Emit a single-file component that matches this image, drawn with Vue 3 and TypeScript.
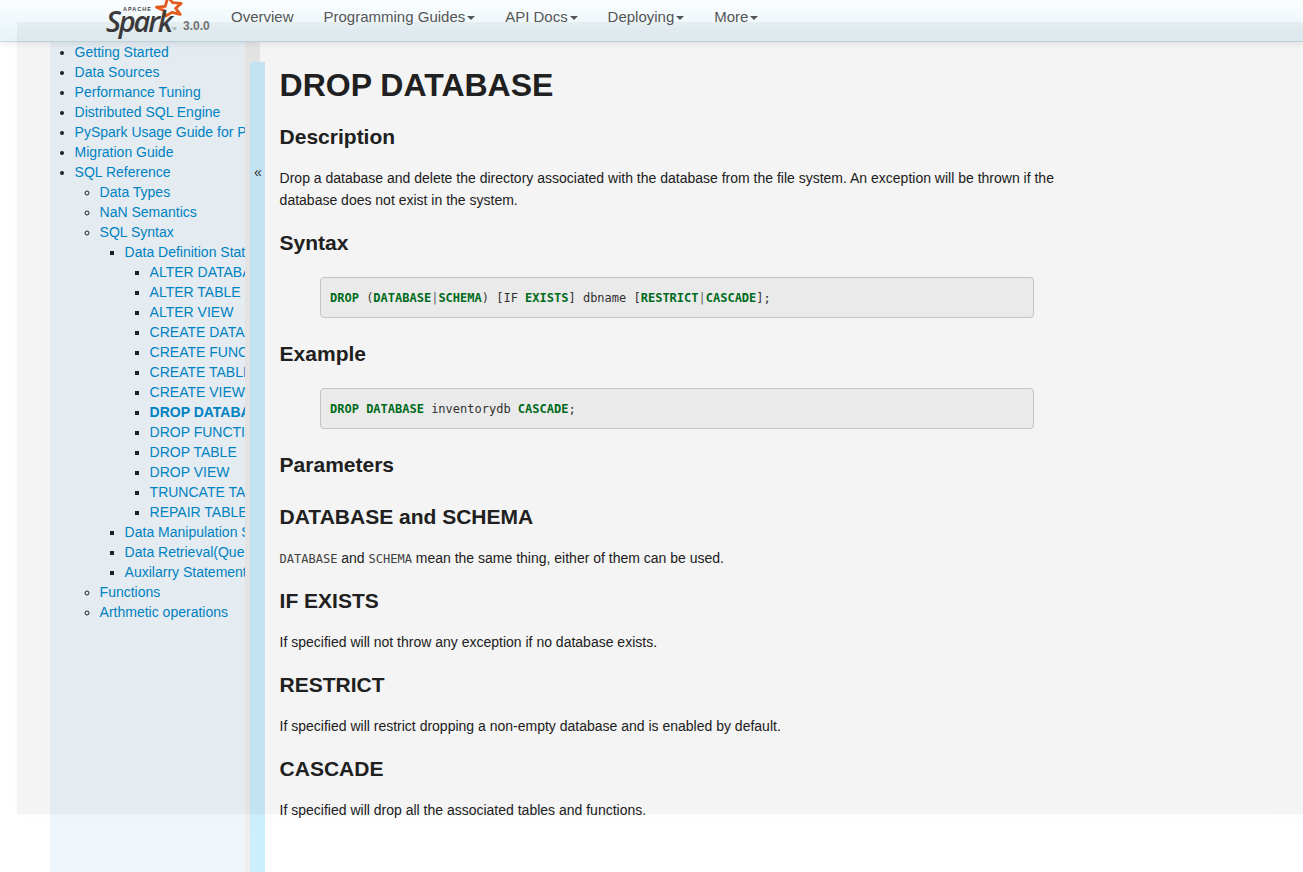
<script setup lang="ts">
const navItems = [
  { label: 'Overview', caret: false },
  { label: 'Programming Guides', caret: true },
  { label: 'API Docs', caret: true },
  { label: 'Deploying', caret: true },
  { label: 'More', caret: true },
]
const topBefore = ['Getting Started', 'Data Sources', 'Performance Tuning', 'Distributed SQL Engine', 'PySpark Usage Guide for Pandas with Apache Arrow', 'Migration Guide']
const ddl = ['ALTER DATABASE', 'ALTER TABLE', 'ALTER VIEW', 'CREATE DATABASE', 'CREATE FUNCTION', 'CREATE TABLE', 'CREATE VIEW', 'DROP DATABASE', 'DROP FUNCTION', 'DROP TABLE', 'DROP VIEW', 'TRUNCATE TABLE', 'REPAIR TABLE']
const syntaxAfter = ['Data Manipulation Statements', 'Data Retrieval(Queries)', 'Auxilarry Statements']
</script>

<template>
  <div class="page">
    <header class="navbar">
      <a class="brand">
        <span class="logo">
          <svg class="star" viewBox="0 0 30 20" width="30" height="20" aria-hidden="true">
            <path d="M1.5 7.2 L10.2 6.4 L13 -3 L17.6 2.6 L26.2 3.4 L20.6 8.2 L25.2 14.4 L17 12.4 L10.6 16 L9.2 10.6 Z" fill="none" stroke="#e25a1c" stroke-width="2.8" stroke-linejoin="round" />
          </svg>
          <span class="apache">APACHE</span>
          <span class="spark">Spark</span>
          <span class="tm">TM</span>
        </span>
        <span class="version">3.0.0</span>
      </a>
      <nav class="nav">
        <a v-for="item in navItems" :key="item.label" class="nav-link">
          {{ item.label }}<i v-if="item.caret" class="caret"></i>
        </a>
      </nav>
    </header>

    <div class="body">
      <aside class="sidebar">
        <ul>
          <li v-for="t in topBefore" :key="t"><a>{{ t }}</a></li>
          <li>
            <a>SQL Reference</a>
            <ul>
              <li><a>Data Types</a></li>
              <li><a>NaN Semantics</a></li>
              <li>
                <a>SQL Syntax</a>
                <ul>
                  <li>
                    <a>Data Definition Statements</a>
                    <ul>
                      <li v-for="d in ddl" :key="d"><a :class="{ active: d === 'DROP DATABASE' }">{{ d }}</a></li>
                    </ul>
                  </li>
                  <li v-for="s in syntaxAfter" :key="s"><a>{{ s }}</a></li>
                </ul>
              </li>
              <li><a>Functions</a></li>
              <li><a>Arthmetic operations</a></li>
            </ul>
          </li>
        </ul>
      </aside>

      <div class="gutter">
        <div class="toggler"><span>«</span></div>
      </div>

      <main class="content">
        <h1>DROP DATABASE</h1>
        <h2 class="after-title">Description</h2>
        <p>Drop a database and delete the directory associated with the database from the file system. An exception will be thrown if the database does not exist in the system.</p>
        <h2>Syntax</h2>
        <pre class="code"><span class="k">DROP</span> <span class="p">(</span><span class="k">DATABASE</span><span class="o">|</span><span class="k">SCHEMA</span><span class="p">)</span> [IF <span class="k">EXISTS</span>] dbname [<span class="k">RESTRICT</span><span class="o">|</span><span class="k">CASCADE</span>];</pre>
        <h2 class="after-block">Example</h2>
        <pre class="code"><span class="k">DROP</span> <span class="k">DATABASE</span> inventorydb <span class="k">CASCADE</span>;</pre>
        <h2 class="after-block">Parameters</h2>
        <h2 class="after-block">DATABASE and SCHEMA</h2>
        <p><code>DATABASE</code> and <code>SCHEMA</code> mean the same thing, either of them can be used.</p>
        <h2>IF EXISTS</h2>
        <p>If specified will not throw any exception if no database exists.</p>
        <h2>RESTRICT</h2>
        <p>If specified will restrict dropping a non-empty database and is enabled by default.</p>
        <h2>CASCADE</h2>
        <p>If specified will drop all the associated tables and functions.</p>
      </main>
    </div>

    <div class="veil"></div>
  </div>
</template>

<style scoped>
.page {
  position: relative;
  width: 100%;
  height: 872px;
  overflow: hidden;
  background: #fff;
  color: #222;
  font-family: "Liberation Sans", Arial, sans-serif;
  font-size: 14px;
}
.navbar {
  position: relative;
  z-index: 2;
  display: flex;
  height: 41px;
  padding-left: 107px;
  background: linear-gradient(to bottom, #fbfeff, #e6f3f8);
  border-bottom: 1px solid #c8dbe3;
  box-shadow: 0 1px 8px rgba(0, 0, 0, 0.1);
}
.brand {
  display: flex;
  width: 109px;
  flex: none;
}
.logo {
  position: relative;
  display: block;
  width: 76px;
  height: 41px;
}
.star {
  position: absolute;
  left: 48px;
  top: 0;
}
.apache {
  position: absolute;
  left: 16px;
  top: 6px;
  font-size: 5.5px;
  line-height: 7px;
  font-weight: 700;
  letter-spacing: 1px;
  color: #444;
}
.spark {
  position: absolute;
  left: -1px;
  top: 3px;
  font-family: "Open Sans", sans-serif;
  font-size: 29px;
  line-height: 36px;
  font-style: italic;
  font-weight: 600;
  letter-spacing: -2.2px;
  color: #3d3d3d;
}
.tm {
  position: absolute;
  left: 65px;
  top: 27px;
  font-size: 3px;
  line-height: 4px;
  color: #777;
}
.version {
  margin-top: 19px;
  font-size: 12px;
  line-height: 15px;
  font-weight: 700;
  color: #777;
}
.nav {
  display: flex;
}
.nav-link {
  padding: 7px 15px 0;
  line-height: 20px;
  font-size: 15px;
  color: #555;
  white-space: nowrap;
}
.caret {
  display: inline-block;
  width: 0;
  height: 0;
  margin-left: 1.9px;
  vertical-align: middle;
  border-top: 4px solid #555;
  border-left: 4px solid transparent;
  border-right: 4px solid transparent;
}
.body {
  display: flex;
  height: 830px;
  padding-left: 50px;
}
.sidebar {
  flex: none;
  width: 195px;
  height: 100%;
  overflow: hidden;
  background: #eff7fc;
  line-height: 20px;
  white-space: nowrap;
}
.sidebar > ul {
  padding-left: 24.6px;
}
.sidebar ul {
  margin: 0;
  list-style: disc;
}
.sidebar ul ul {
  padding-left: 25px;
  list-style: circle;
}
.sidebar ul ul ul,
.sidebar ul ul ul ul {
  list-style: square;
}
.sidebar a {
  color: #0088cc;
}
.sidebar a.active {
  font-weight: 700;
}
.gutter {
  position: relative;
  flex: none;
  width: 15px;
  background: #eee;
}
.toggler {
  position: absolute;
  left: 5px;
  top: 20px;
  bottom: 0;
  width: 15px;
  background: #cdeefd;
  z-index: 1;
}
.toggler span {
  display: block;
  margin-top: 100px;
  padding-left: 1px;
  line-height: 20px;
  font-size: 14px;
  text-align: center;
  color: #333;
}
.content {
  flex: none;
  width: 790px;
  padding-left: 19.6px;
}
h1 {
  margin: 20px 0 0;
  font-size: 32px;
  line-height: 46px;
}
h2 {
  margin: 16px 0 0;
  font-size: 21px;
  line-height: 32px;
}
h2.after-title {
  margin-top: 13px;
}
h2.after-block {
  margin-top: 20px;
}
p {
  margin: 14px 0 0;
  line-height: 22px;
}
.code {
  width: 714px;
  box-sizing: border-box;
  margin: 18px 0 0 40.4px;
  padding: 10px 9px 8px;
  height: 41px;
  background: #f5f5f5;
  border: 1px solid #ccc;
  border-radius: 4px;
  font-family: "DejaVu Sans Mono", monospace;
  font-size: 12px;
  line-height: 21px;
  color: #333;
}
.k {
  color: #007020;
  font-weight: 700;
}
.o {
  color: #666;
}
.p {
  color: #444;
}
code {
  font-family: "DejaVu Sans Mono", monospace;
  font-size: 12px;
  line-height: 1;
  color: #444;
}
.veil {
  position: absolute;
  left: 17px;
  top: 22px;
  right: 0;
  height: 792px;
  background: rgba(0, 0, 0, 0.042);
  box-shadow: 0 6px 24px rgba(0, 0, 0, 0.012);
  pointer-events: none;
  z-index: 3;
}
</style>
